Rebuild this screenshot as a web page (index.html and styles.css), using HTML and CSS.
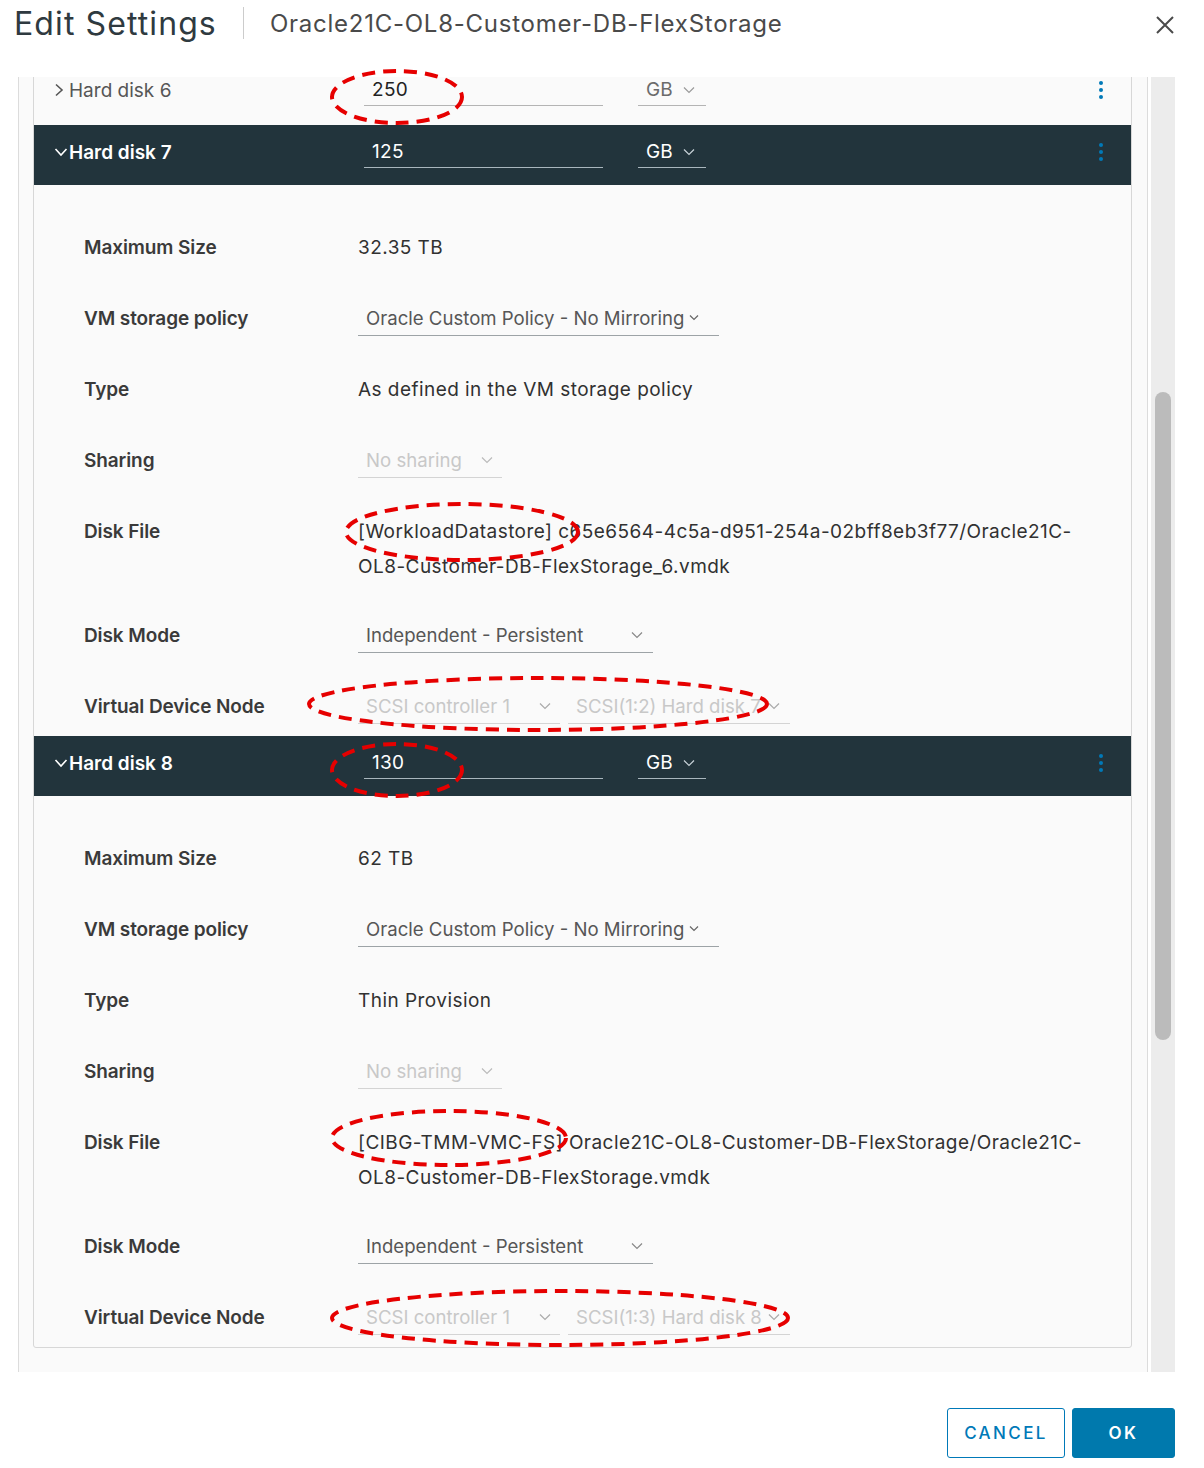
FILE: index.html
```html
<!DOCTYPE html>
<html lang="en">
<head>
    <meta charset="UTF-8">
    <title>Edit Settings</title>
    <link rel="stylesheet" href="styles.css">
</head>
<body>
    <div class="dialog">
        <div class="dlg-head">
            <h1 class="dlg-title">Edit Settings</h1>
            <span class="dlg-sep"></span>
            <span class="dlg-sub">Oracle21C-OL8-Customer-DB-FlexStorage</span>
            <button class="dlg-close" type="button">
                <svg width="20" height="20" viewBox="0 0 20 20"><path d="M2 2 L18 18 M18 2 L2 18" stroke="#4a4a4a" stroke-width="2" fill="none"/></svg>
            </button>
        </div>

        <div class="dlg-body">
            <div class="scroller">
                <div class="card">
                    <!-- hard disk 6, collapsed -->
                    <div class="disk-head">
                        <span class="disk-name">
                            <svg class="caret" width="15" height="14" viewBox="0 0 15 14"><path d="M2 1.5 L8 7 L2 12.5" stroke="#565656" stroke-width="1.6" fill="none"/></svg>
                            Hard disk 6
                        </span>
                        <span class="size-input">250</span>
                        <span class="select unit">GB <svg class="chev" width="12" height="8" viewBox="0 0 12 8"><path d="M1 1.5 L6 6.5 L11 1.5" stroke="#9a9a9a" stroke-width="1.2" fill="none"/></svg></span>
                        <span class="kebab"><i></i><i></i><i></i></span>
                    </div>

                    <!-- hard disk 7 -->
                    <div class="disk-head open">
                        <span class="disk-name">
                            <svg class="caret" width="15" height="10" viewBox="0 0 15 10"><path d="M1.5 2 L7 8 L12.5 2" stroke="#fff" stroke-width="1.6" fill="none"/></svg>
                            Hard disk 7
                        </span>
                        <span class="size-input">125</span>
                        <span class="select unit">GB <svg class="chev" width="12" height="8" viewBox="0 0 12 8"><path d="M1 1.5 L6 6.5 L11 1.5" stroke="#c8d2d8" stroke-width="1.2" fill="none"/></svg></span>
                        <span class="kebab"><i></i><i></i><i></i></span>
                    </div>
                    <div class="disk-detail">
                        <div class="field">
                            <span class="label">Maximum Size</span>
                            <span class="value">32.35 TB</span>
                        </div>
                        <div class="field">
                            <span class="label">VM storage policy</span>
                            <span class="select policy">Oracle Custom Policy - No Mirroring <svg class="chev" width="10" height="7" viewBox="0 0 10 7"><path d="M1 1.5 L5 5.5 L9 1.5" stroke="#666" stroke-width="1.2" fill="none"/></svg></span>
                        </div>
                        <div class="field">
                            <span class="label">Type</span>
                            <span class="value">As defined in the VM storage policy</span>
                        </div>
                        <div class="field">
                            <span class="label">Sharing</span>
                            <span class="select sharing disabled">No sharing <svg class="chev" width="12" height="8" viewBox="0 0 12 8"><path d="M1 1.5 L6 6.5 L11 1.5" stroke="#bbb" stroke-width="1.2" fill="none"/></svg></span>
                        </div>
                        <div class="field file">
                            <span class="label">Disk File</span>
                            <span class="value">[WorkloadDatastore] c65e6564-4c5a-d951-254a-02bff8eb3f77/Oracle21C-<br>OL8-Customer-DB-FlexStorage_6.vmdk</span>
                        </div>
                        <div class="field">
                            <span class="label">Disk Mode</span>
                            <span class="select mode">Independent - Persistent <svg class="chev" width="12" height="8" viewBox="0 0 12 8"><path d="M1 1.5 L6 6.5 L11 1.5" stroke="#888" stroke-width="1.2" fill="none"/></svg></span>
                        </div>
                        <div class="field">
                            <span class="label">Virtual Device Node</span>
                            <span class="select-pair">
                                <span class="select ctrl disabled">SCSI controller 1 <svg class="chev" width="12" height="8" viewBox="0 0 12 8"><path d="M1 1.5 L6 6.5 L11 1.5" stroke="#aaa" stroke-width="1.2" fill="none"/></svg></span>
                                <span class="select node disabled">SCSI(1:2) Hard disk 7 <svg class="chev" width="12" height="8" viewBox="0 0 12 8"><path d="M1 1.5 L6 6.5 L11 1.5" stroke="#aaa" stroke-width="1.2" fill="none"/></svg></span>
                            </span>
                        </div>
                    </div>

                    <!-- hard disk 8 -->
                    <div class="disk-head open">
                        <span class="disk-name">
                            <svg class="caret" width="15" height="10" viewBox="0 0 15 10"><path d="M1.5 2 L7 8 L12.5 2" stroke="#fff" stroke-width="1.6" fill="none"/></svg>
                            Hard disk 8
                        </span>
                        <span class="size-input">130</span>
                        <span class="select unit">GB <svg class="chev" width="12" height="8" viewBox="0 0 12 8"><path d="M1 1.5 L6 6.5 L11 1.5" stroke="#c8d2d8" stroke-width="1.2" fill="none"/></svg></span>
                        <span class="kebab"><i></i><i></i><i></i></span>
                    </div>
                    <div class="disk-detail">
                        <div class="field">
                            <span class="label">Maximum Size</span>
                            <span class="value">62 TB</span>
                        </div>
                        <div class="field">
                            <span class="label">VM storage policy</span>
                            <span class="select policy">Oracle Custom Policy - No Mirroring <svg class="chev" width="10" height="7" viewBox="0 0 10 7"><path d="M1 1.5 L5 5.5 L9 1.5" stroke="#666" stroke-width="1.2" fill="none"/></svg></span>
                        </div>
                        <div class="field">
                            <span class="label">Type</span>
                            <span class="value">Thin Provision</span>
                        </div>
                        <div class="field">
                            <span class="label">Sharing</span>
                            <span class="select sharing disabled">No sharing <svg class="chev" width="12" height="8" viewBox="0 0 12 8"><path d="M1 1.5 L6 6.5 L11 1.5" stroke="#bbb" stroke-width="1.2" fill="none"/></svg></span>
                        </div>
                        <div class="field file">
                            <span class="label">Disk File</span>
                            <span class="value">[CIBG-TMM-VMC-FS] Oracle21C-OL8-Customer-DB-FlexStorage/Oracle21C-<br>OL8-Customer-DB-FlexStorage.vmdk</span>
                        </div>
                        <div class="field">
                            <span class="label">Disk Mode</span>
                            <span class="select mode">Independent - Persistent <svg class="chev" width="12" height="8" viewBox="0 0 12 8"><path d="M1 1.5 L6 6.5 L11 1.5" stroke="#888" stroke-width="1.2" fill="none"/></svg></span>
                        </div>
                        <div class="field">
                            <span class="label">Virtual Device Node</span>
                            <span class="select-pair">
                                <span class="select ctrl disabled">SCSI controller 1 <svg class="chev" width="12" height="8" viewBox="0 0 12 8"><path d="M1 1.5 L6 6.5 L11 1.5" stroke="#aaa" stroke-width="1.2" fill="none"/></svg></span>
                                <span class="select node disabled">SCSI(1:3) Hard disk 8 <svg class="chev" width="12" height="8" viewBox="0 0 12 8"><path d="M1 1.5 L6 6.5 L11 1.5" stroke="#aaa" stroke-width="1.2" fill="none"/></svg></span>
                            </span>
                        </div>
                    </div>
                </div>
            </div>
            <div class="scrollbar"><div class="thumb"></div></div>
        </div>

        <div class="dlg-foot">
            <button class="btn btn-outline" type="button">CANCEL</button>
            <button class="btn btn-primary" type="button">OK</button>
        </div>
    </div>

    <!-- red review marks drawn over the screenshot -->
    <svg class="marks" width="1204" height="1468" viewBox="0 0 1204 1468">
        <g fill="none" stroke="#e60000" stroke-width="4" stroke-dasharray="13 8">
            <ellipse cx="397" cy="97" rx="65" ry="26"/>
            <ellipse cx="462" cy="532" rx="116" ry="28"/>
            <ellipse cx="538" cy="704" rx="229" ry="26"/>
            <ellipse cx="397" cy="770" rx="65" ry="26"/>
            <ellipse cx="449" cy="1138" rx="117" ry="27"/>
            <ellipse cx="560" cy="1318" rx="228" ry="27"/>
        </g>
    </svg>
</body>
</html>
```

FILE: styles.css
```css
body {
    margin: 0;
    background: #fff;
    font-family: Inter, "Noto Sans", sans-serif;
    color: #313131;
}
.dialog {
    position: relative;
    width: 1204px;
    height: 1468px;
}

/* header */
.dlg-head {
    display: flex;
    align-items: center;
    height: 46px;
    padding: 0 29px 0 14px;
    margin-bottom: 31px;
}
.dlg-title {
    margin: 0;
    font-size: 32px;
    font-weight: 400;
    color: #2f3a40;
    letter-spacing: 1.1px;
}
.dlg-sep {
    width: 1px;
    height: 32px;
    background: #ccc;
    margin: 0 26px 0 26px;
}
.dlg-sub {
    font-size: 24px;
    color: #4a4a4a;
    letter-spacing: 0.75px;
    flex: 1;
}
.dlg-close {
    border: 0;
    background: none;
    padding: 0;
    width: 20px;
    height: 20px;
    margin-top: 4px;
}

/* scrolling area */
.dlg-body {
    display: flex;
    height: 1295px;
    margin-left: 18px;
    width: 1157px;
}
.scroller {
    width: 1114px;
    border-left: 1px solid #dcdcdc;
    border-right: 1px solid #dcdcdc;
    background: #fafafa;
    padding: 0 15px 0 14px;
    overflow: hidden;
}
.scrollbar {
    margin-left: 3px;
    width: 24px;
    background: #ececec;
    position: relative;
}
.thumb {
    position: absolute;
    left: 4px;
    top: 315px;
    width: 16px;
    height: 648px;
    border-radius: 8px;
    background: #bbb;
}

.card {
    margin-top: -15px;
    border: 1px solid #d7d7d7;
    border-radius: 0 0 3px 3px;
    background: #fafafa;
}

/* disk header rows */
.disk-head {
    display: flex;
    align-items: flex-start;
    height: 62px;
    padding: 11px 0 0 20px;
    box-sizing: border-box;
    font-size: 19px;
    color: #565656;
}
.disk-head.open {
    height: 60px;
    background: #22343c;
    color: #fff;
    font-weight: 600;
}
.disk-name {
    display: flex;
    align-items: center;
    width: 310px;
    height: 32px;
}
.size-input {
    box-sizing: border-box;
    width: 239px;
    height: 32px;
    line-height: 32px;
    padding-left: 8px;
    border-bottom: 1px solid #b4b4b4;
    color: #222;
    font-weight: 400;
    letter-spacing: 0.3px;
}
.open .size-input {
    color: #fff;
    border-bottom-color: #a9b6bd;
}
.kebab {
    margin-left: auto;
    margin-right: 28px;
    display: flex;
    flex-direction: column;
    justify-content: center;
    gap: 3px;
    height: 32px;
}
.kebab i {
    width: 4px;
    height: 4px;
    border-radius: 50%;
    background: #0079b8;
}

/* selects */
.select {
    display: inline-flex;
    align-items: center;
    box-sizing: border-box;
    height: 36px;
    padding: 0 10px 0 8px;
    border-bottom: 1px solid #9da3a6;
    font-size: 18.6px;
    color: #565656;
    white-space: nowrap;
}
.select .chev {
    margin-left: auto;
}
.select.unit {
    width: 68px;
    height: 32px;
    margin-left: 35px;
    padding-right: 11px;
    font-size: 19px;
    color: #6b6b6b;
    border-bottom-color: #b4b4b4;
    font-weight: 400;
}
.open .select.unit {
    color: #fff;
    border-bottom-color: #a9b6bd;
}
.select.policy { width: 361px; padding-right: 20px; }
.select.sharing { width: 144px; padding-right: 9px; }
.select.mode { width: 295px; }
.select.ctrl { width: 202px; padding-right: 9px; }
.select.node { width: 222px; }
.select.disabled {
    color: #c8c8c8;
    border-bottom-color: #d4d4d4;
}
.select-pair {
    display: flex;
    gap: 8px;
}

/* detail fields */
.disk-detail {
    padding: 32px 0 0 50px;
    display: flex;
    flex-direction: column;
    gap: 11px;
}
.field {
    display: flex;
    align-items: center;
    min-height: 60px;
    font-size: 19px;
}
.label {
    width: 274px;
    flex-shrink: 0;
    font-weight: 600;
    color: #3a3a3a;
    letter-spacing: -0.1px;
}
.value {
    color: #313131;
    letter-spacing: 0.45px;
}
.field.file {
    align-items: flex-start;
    padding: 13px 0 10px;
}
.field.file .label,
.field.file .value {
    line-height: 35px;
}

/* footer */
.dlg-foot {
    display: flex;
    justify-content: flex-end;
    gap: 7px;
    padding: 36px 29px 0 0;
}
.btn {
    height: 50px;
    border-radius: 3px;
    font-family: Inter, "Noto Sans", sans-serif;
    font-size: 17px;
    font-weight: 500;
    letter-spacing: 2.4px;
}
.btn-outline {
    width: 118px;
    background: #fff;
    border: 1px solid #0079b8;
    color: #0079b8;
}
.btn-primary {
    width: 103px;
    background: #0079ad;
    border: 1px solid #0079ad;
    color: #fff;
    font-weight: 600;
}

.marks {
    position: absolute;
    left: 0;
    top: 0;
    pointer-events: none;
}
```
